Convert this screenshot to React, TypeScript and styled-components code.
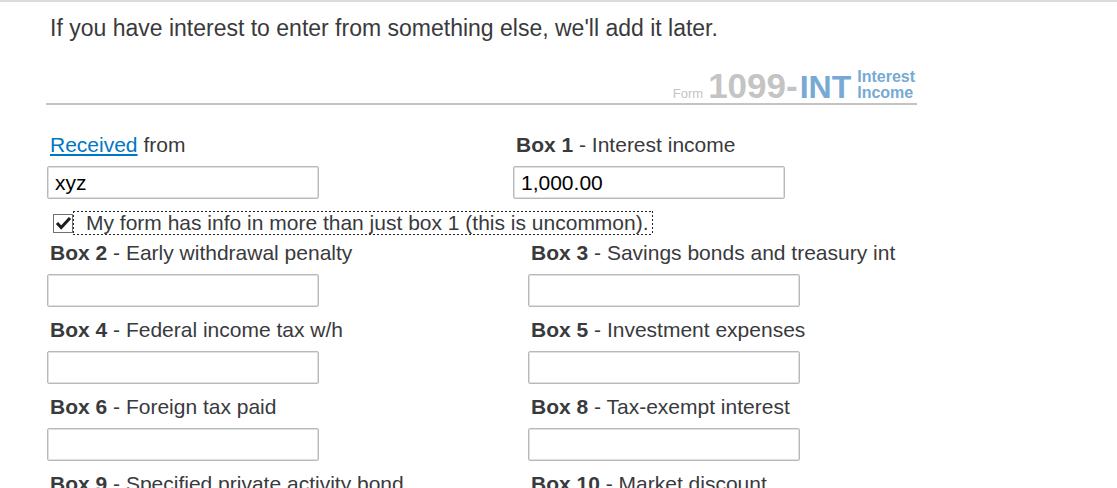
import { useId, useState } from "react";
import type { ReactNode } from "react";
import styled, { createGlobalStyle } from "styled-components";

const GlobalStyle = createGlobalStyle`
  *, *::before, *::after { box-sizing: border-box; }
  html { scrollbar-width: none; }
  body {
    margin: 0;
    background: #fff;
    color: #393a3d;
    font: 21px/24px "Liberation Sans", Arial, sans-serif;
  }
`;

const Page = styled.main`
  border-top: 2px solid #dcdcdc;
  padding: 12px 47px;
`;

const Intro = styled.p`
  margin: 0;
  padding-left: 3px;
  font-size: 23px;
  line-height: 28px;
`;

const Form = styled.form`
  max-width: 870px;
`;

const FormTitle = styled.h1`
  display: flex;
  justify-content: flex-end;
  align-items: baseline;
  margin: 0 0 28px -1px;
  padding: 26px 2px 0 0;
  border-bottom: 2px solid #c4c4c4;
  line-height: 35px;
  font-size: 35px;
  color: #c4c4c4;
`;

const FormWord = styled.span`
  margin-right: 5px;
  font-size: 13px;
  font-weight: 400;
  line-height: 16px;
`;

const FormCode = styled.span`
  margin-left: 2px;
  font-size: 32px;
  line-height: 32px;
  color: #76a9d3;
`;

const FormName = styled.span`
  display: flex;
  flex-direction: column;
  align-self: flex-end;
  margin: 0 0 2px 6px;
  font-size: 16px;
  line-height: 16px;
  color: #76a9d3;
`;

const Columns = styled.div<{ $offset: number }>`
  display: grid;
  grid-template-columns: ${(p) => p.$offset}px 1fr;
  row-gap: 11px;
`;

const FieldBox = styled.div`
  display: flex;
  flex-direction: column;
  align-items: flex-start;
  gap: 9px;
`;

const FieldLabel = styled.label`
  padding-left: 3px;
  white-space: nowrap;
`;

const TextInput = styled.input`
  width: 272px;
  height: 33px;
  padding: 0 7px;
  border: 1px solid #b6b9bd;
  border-radius: 2px;
  box-shadow: inset 0 0 0 1px #dfe0e2;
  background: #fff;
  color: #000;
  font: inherit;
  outline: none;
`;

const HelpLink = styled.a`
  color: #0077c5;
  text-decoration: underline;
`;

const CheckRow = styled.div`
  display: flex;
  align-items: center;
  margin: 12px 0 6px 6px;
`;

const CheckBox = styled.input`
  appearance: none;
  width: 20px;
  height: 19px;
  margin: 0;
  border: 1px solid #707070;
  background: #fff;
  outline: none;
`;

const CheckControl = styled.span`
  display: grid;

  > * { grid-area: 1 / 1; }
  > svg { pointer-events: none; }
`;

const CheckLabel = styled.label`
  border: 1px solid transparent;
  padding: 0 3px 0 12px;
  line-height: 22px;
  white-space: nowrap;
  background:
    repeating-linear-gradient(90deg, #222 0 2px, transparent 2px 4px) top / 100% 1px no-repeat border-box,
    repeating-linear-gradient(90deg, #222 0 2px, transparent 2px 4px) bottom / 100% 1px no-repeat border-box,
    repeating-linear-gradient(#222 0 2px, transparent 2px 4px) left / 1px 100% no-repeat border-box,
    repeating-linear-gradient(#222 0 2px, transparent 2px 4px) right / 1px 100% no-repeat border-box;
`;

interface FieldProps {
  label: ReactNode;
  value?: string;
}

function Field({ label, value = "" }: FieldProps) {
  const id = useId();
  return (
    <FieldBox>
      <FieldLabel htmlFor={id}>{label}</FieldLabel>
      <TextInput id={id} type="text" defaultValue={value} />
    </FieldBox>
  );
}

const boxes = [
  ["2", "Early withdrawal penalty"],
  ["3", "Savings bonds and treasury int"],
  ["4", "Federal income tax w/h"],
  ["5", "Investment expenses"],
  ["6", "Foreign tax paid"],
  ["8", "Tax-exempt interest"],
  ["9", "Specified private activity bond"],
  ["10", "Market discount"],
];

export default function App() {
  const [more, setMore] = useState(true);
  return (
    <>
      <GlobalStyle />
      <Page>
        <Intro>If you have interest to enter from something else, we'll add it later.</Intro>
        <Form>
          <FormTitle>
            <FormWord>Form</FormWord>
            <span>1099-</span>
            <FormCode>INT</FormCode>
            <FormName>
              <span>Interest</span>
              <span>Income</span>
            </FormName>
          </FormTitle>
          <Columns $offset={466}>
            <Field label={<><HelpLink href="#received">Received</HelpLink> from</>} value="xyz" />
            <Field label={<><b>Box 1</b> - Interest income</>} value="1,000.00" />
          </Columns>
          <CheckRow>
            <CheckControl>
              <CheckBox id="more" type="checkbox" checked={more} onChange={(e) => setMore(e.target.checked)} />
              {more && (
                <svg width="20" height="19" viewBox="0 0 20 19" fill="none" aria-hidden="true">
                  <path d="M4 9 8.2 13.6 17 4" stroke="#1c1c1c" strokeWidth="3" />
                </svg>
              )}
            </CheckControl>
            <CheckLabel htmlFor="more">My form has info in more than just box 1 (this is uncommon).</CheckLabel>
          </CheckRow>
          {more && (
            <Columns $offset={481}>
              {boxes.map(([number, name]) => (
                <Field key={number} label={<><b>Box {number}</b> - {name}</>} />
              ))}
            </Columns>
          )}
        </Form>
      </Page>
    </>
  );
}
